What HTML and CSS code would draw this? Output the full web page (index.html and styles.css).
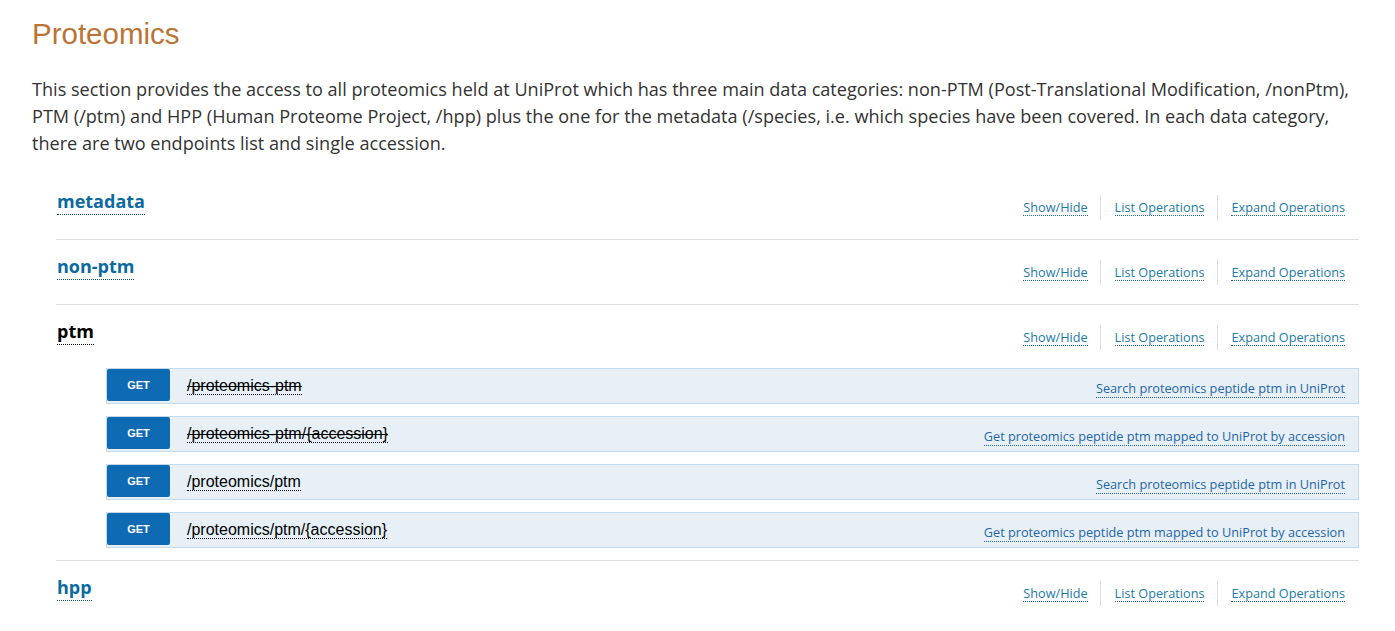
FILE: index.html
```html
<!DOCTYPE html>
<html lang="en">
<head>
<meta charset="utf-8">
<title>Proteomics</title>
<link rel="stylesheet" href="styles.css">
</head>
<body>
<div class="page">
  <h1 class="title">Proteomics</h1>
  <p class="intro">This section provides the access to all proteomics held at UniProt which has three main data categories: non-PTM (Post-Translational Modification, /nonPtm), PTM (/ptm) and HPP (Human Proteome Project, /hpp) plus the one for the metadata (/species, i.e. which species have been covered. In each data category, there are two endpoints list and single accession.</p>

  <ul class="resources">
    <li class="resource">
      <div class="resource-heading">
        <h2 class="resource-name"><a href="#">metadata</a></h2>
        <ul class="options">
          <li><a href="#">Show/Hide</a></li>
          <li><a href="#">List Operations</a></li>
          <li><a href="#">Expand Operations</a></li>
        </ul>
      </div>
    </li>
    <li class="resource">
      <div class="resource-heading">
        <h2 class="resource-name"><a href="#">non-ptm</a></h2>
        <ul class="options">
          <li><a href="#">Show/Hide</a></li>
          <li><a href="#">List Operations</a></li>
          <li><a href="#">Expand Operations</a></li>
        </ul>
      </div>
    </li>
    <li class="resource active">
      <div class="resource-heading">
        <h2 class="resource-name"><a href="#">ptm</a></h2>
        <ul class="options">
          <li><a href="#">Show/Hide</a></li>
          <li><a href="#">List Operations</a></li>
          <li><a href="#">Expand Operations</a></li>
        </ul>
      </div>
      <ul class="endpoints">
        <li class="operation">
          <div class="op-heading">
            <span class="method">GET</span>
            <span class="path deprecated"><a href="#">/proteomics-ptm</a></span>
            <span class="desc"><a href="#">Search proteomics peptide ptm in UniProt</a></span>
          </div>
        </li>
        <li class="operation">
          <div class="op-heading">
            <span class="method">GET</span>
            <span class="path deprecated"><a href="#">/proteomics-ptm/{accession}</a></span>
            <span class="desc"><a href="#">Get proteomics peptide ptm mapped to UniProt by accession</a></span>
          </div>
        </li>
        <li class="operation">
          <div class="op-heading">
            <span class="method">GET</span>
            <span class="path"><a href="#">/proteomics/ptm</a></span>
            <span class="desc"><a href="#">Search proteomics peptide ptm in UniProt</a></span>
          </div>
        </li>
        <li class="operation">
          <div class="op-heading">
            <span class="method">GET</span>
            <span class="path"><a href="#">/proteomics/ptm/{accession}</a></span>
            <span class="desc"><a href="#">Get proteomics peptide ptm mapped to UniProt by accession</a></span>
          </div>
        </li>
      </ul>
    </li>
    <li class="resource last">
      <div class="resource-heading">
        <h2 class="resource-name"><a href="#">hpp</a></h2>
        <ul class="options">
          <li><a href="#">Show/Hide</a></li>
          <li><a href="#">List Operations</a></li>
          <li><a href="#">Expand Operations</a></li>
        </ul>
      </div>
    </li>
  </ul>
</div>
</body>
</html>
```

FILE: styles.css
```css
html, body {
  margin: 0;
  padding: 0;
  background: #ffffff;
}

.page {
  padding: 0 36px 0 32px;
  font-family: "Open Sans", "Liberation Sans", sans-serif;
  color: #333333;
}

.title {
  margin: 17px 0 0 0;
  font-family: "Liberation Sans", Arial, sans-serif;
  font-size: 29.5px;
  font-weight: normal;
  line-height: normal;
  color: #bb7435;
}

.intro {
  margin: 25px -20px 0 0;
  font-size: 18.1px;
  line-height: 27px;
  color: #333333;
}

.resources {
  list-style: none;
  margin: 18px 0 0 24px;
  padding: 0;
}

.resource {
  border-bottom: 1px solid #dddddd;
}

.resource.last {
  border-bottom: none;
}

.resource-heading {
  display: flex;
  justify-content: space-between;
  align-items: flex-start;
  height: 64px;
}

.resource-name {
  margin: 0;
  padding: 14px 0 0 1px;
  font-size: 18px;
  font-weight: bold;
  line-height: 24px;
}

.resource-name a {
  display: inline-block;
  line-height: 24px;
  padding-bottom: 1px;
  color: #0b6a9f;
  text-decoration: none;
  border-bottom: 1px dotted #0b4f78;
}

.resource.active .resource-name a {
  color: #000000;
  border-bottom-color: #000000;
}

.options {
  display: flex;
  list-style: none;
  margin: 20px 1px 0 0;
  padding: 0;
}

.options li {
  height: 25px;
  line-height: 25px;
  padding: 0 13px;
  border-left: 1px solid #dddddd;
  font-size: 12.7px;
}

.options li:first-child {
  border-left: none;
  padding-right: 12px;
}

.options li:nth-child(2) {
  padding-left: 14px;
}

.options a {
  display: inline-block;
  line-height: 15px;
  color: #1c7aa6;
  text-decoration: none;
  border-bottom: 1px dotted #1c6f98;
}

.endpoints {
  list-style: none;
  margin: -1px 0 12px 50px;
  padding: 0;
  display: flex;
  flex-direction: column;
  gap: 12px;
}

.op-heading {
  display: flex;
  align-items: flex-start;
  height: 34px;
  background: #e7f0f7;
  border: 1px solid #c3d9ec;
}

.method {
  width: 63px;
  height: 32px;
  background: #0f6ab4;
  border-radius: 2px;
  color: #ffffff;
  font-family: "Liberation Sans", Arial, sans-serif;
  font-size: 11px;
  font-weight: bold;
  line-height: 32px;
  text-align: center;
  text-transform: uppercase;
}

.path {
  margin-left: 17px;
  padding-top: 8px;
  font-family: "Liberation Sans", Arial, sans-serif;
  font-size: 16px;
}

.path a {
  display: inline-block;
  line-height: 16px;
  color: #000000;
  text-decoration: none;
  border-bottom: 1px dotted #000000;
}

.path.deprecated a {
  text-decoration: line-through;
}

.desc {
  margin-left: auto;
  padding: 10px 13px 0 0;
  font-size: 12.7px;
}

.desc a {
  display: inline-block;
  line-height: 17px;
  color: #1f64a8;
  text-decoration: none;
  border-bottom: 1px dotted #1f5f9e;
}
```
